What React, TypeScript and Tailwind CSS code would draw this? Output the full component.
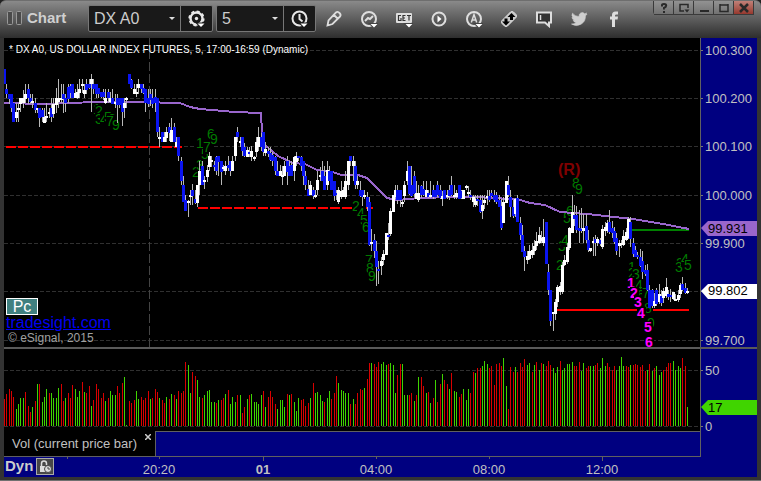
import type { ReactNode } from "react";

// x position of bar n, in chart pixels
const barX = (n: number) => Math.round(n * 2.355);

// direction + high, body top, body bottom, low
const CANDLES = `b69,69,84,84 b84,89,94,98 b94,94,99,104 b94,94,108,112 b103,103,122,122 w103,112,118,122 w103,108,110,122 w98,98,104,112 w90,98,103,108 w84,94,99,103
b84,89,98,104 b94,98,102,104 w94,101,102,108 b98,103,110,113 w108,108,109,113 b108,108,118,127 b108,110,117,122 w108,117,123,123 w103,116,118,122 w108,112,113,118
b98,108,117,122 w98,104,114,118 w88,98,105,113 w79,98,102,108 w84,98,100,103 b84,94,99,113 b94,98,103,112 b84,87,99,103 b84,86,93,98 b84,84,98,98
w89,93,98,98 w84,92,98,99 w79,89,93,98 w79,84,86,93 w84,90,94,98 b79,84,90,94 b79,84,88,89 w74,79,84,112 b79,84,89,94 b84,84,94,98
b88,88,94,98 b92,92,97,98 b89,92,97,100 w89,98,103,104 b89,92,98,103 w92,98,102,103 b89,98,104,104 w94,102,104,108 b94,98,105,123 b98,98,105,108
b98,98,112,126 w98,103,108,118 w97,98,99,108 b74,74,84,84 b79,80,88,89 w84,89,94,94 w84,92,94,97 w79,84,88,94 b84,84,89,93 b84,88,93,94
b89,89,103,112 b89,98,104,107 b89,94,100,106 b89,98,104,108 b89,97,103,112 b98,98,132,137 w127,137,139,147 b132,132,142,142 w132,137,142,142 w127,132,138,142
b123,127,133,141 w118,130,142,142 b123,127,142,142 w137,142,147,147 b137,137,156,161 b157,161,181,185 b176,185,202,202 b195,200,211,211 w200,201,203,217 w190,195,197,205
b184,190,196,205 b190,199,203,204 w185,185,203,207 w161,171,185,195 b161,166,185,185 w176,180,182,189 w165,170,177,182 w152,156,167,171 w156,160,162,167 b161,165,167,171
b156,157,171,175 b156,156,162,176 b161,161,172,185 w165,167,169,171 w161,166,171,175 b156,165,168,171 b161,161,171,176 w156,161,171,171 w137,137,156,161 b127,132,137,142
w137,141,142,147 b137,137,151,156 b143,147,156,157 w147,150,157,157 b147,152,153,157 w146,151,157,161 w156,157,158,161 w137,142,152,157 w127,137,147,151 b133,137,147,151
b132,132,152,156 w142,149,153,156 b147,151,154,157 b147,153,160,161 b152,155,161,166 b156,157,171,175 b161,171,176,176 w165,171,176,176 w166,175,177,185 w161,166,176,176
b156,161,172,185 b161,166,176,176 b161,165,176,176 w156,157,171,181 w152,156,162,166 b156,156,158,161 b156,157,166,171 b161,161,176,185 b171,176,185,190 b180,189,196,196
w181,185,195,195 b187,190,196,199 w190,195,197,198 w171,180,190,195 w167,175,177,181 b161,171,181,181 b166,176,190,190 w161,170,185,190 b166,171,181,181 b171,171,190,190
b181,181,196,201 b190,193,195,200 w187,190,202,204 w181,191,197,199 w187,190,197,197 w171,181,197,199 w161,161,185,190 b156,156,161,166 w156,161,166,181 b161,166,185,189
w176,181,185,189 b181,190,196,197 b190,190,197,206 w190,195,197,199 b192,197,207,211 b197,202,245,246 w229,242,244,251 b234,240,251,258 b241,251,267,286 b261,269,271,284
w257,261,266,275 w250,254,260,265 w233,233,255,255 b223,235,237,240 w208,211,234,236 w195,195,212,212 w185,190,197,199 b185,190,200,204 b190,190,200,207 w200,202,204,207
w181,185,196,202 w161,171,181,185 b166,166,194,195 b166,185,196,197 b171,176,194,197 w181,193,199,199 w185,193,200,202 b185,186,195,198 b181,189,195,196 w181,190,197,197
b190,193,197,198 w181,195,197,198 b185,190,197,199 b190,190,197,197 b181,185,195,197 b185,190,198,199 w191,196,199,206 b190,190,199,199 w190,195,196,199 b185,190,196,200
b176,185,195,196 w185,195,197,199 w190,193,197,199 b185,185,199,199 b190,191,198,199 w190,190,199,199 w185,186,188,190 w186,192,194,197 b190,195,197,200 w195,197,202,207
w195,199,205,207 b195,199,201,206 b195,200,212,213 w195,205,211,219 w195,200,203,209 w190,196,198,205 b190,196,200,202 b190,193,196,197 b190,195,200,202 b192,195,202,204
b195,200,207,207 b199,206,228,230 w197,202,223,223 w181,181,203,203 b176,185,195,197 b190,197,207,217 b200,207,216,218 w198,199,214,217 b195,198,222,222 b217,223,235,240
b225,235,252,252 b246,251,257,271 w251,256,260,264 w245,251,259,260 w243,250,255,258 w240,246,251,255 w232,241,246,250 w227,235,243,244 w231,238,241,243 w219,237,243,246
b222,222,264,264 b264,272,290,295 b290,290,321,326 w312,312,314,331 w299,302,314,320 w285,287,302,307 w282,286,292,295 w262,265,292,294 w255,260,265,266 w243,247,262,264
w227,228,248,250 w195,212,233,233 b205,215,219,226 b206,215,230,233 b210,228,231,243 b208,229,231,233 w214,228,231,243 b214,226,240,243 b230,240,250,252 w248,248,251,252
w237,241,243,256 b235,239,243,256 w237,239,243,246 b238,240,244,246 w225,229,247,249 w222,227,231,236 w220,223,231,233 b210,222,232,234 b221,228,233,238 b227,231,242,244
b233,238,251,255 w240,243,246,257 w240,243,245,248 w230,236,245,246 w228,232,240,241 w217,219,238,239 b217,222,239,247 b238,243,254,257 b246,250,257,257 b252,255,257,259
b249,257,266,267 b251,261,272,279 b265,270,274,276 b264,270,290,291 b285,290,308,308 b289,290,306,308 w293,301,306,308 b288,290,304,306 w284,294,302,304 b290,296,303,306
w288,291,298,303 w278,287,296,298 b290,294,297,300 b289,295,297,302 w292,292,299,300 w294,299,301,301 w290,295,300,302 w283,285,294,298 b277,284,290,291 b283,288,293,294
w288,291,293,294`
  .split(/\s+/)
  .map((c) => ({ up: c[0] === "w", v: c.slice(1).split(",").map((n) => Number(n) - 38) }));

// r = down bar, g = up bar, then the height
const VOLUME = `r27 r32 r37 r35 r29 g17 g22 g28 g28 r34 r20 r14 g19 r25 g42 r42 g24 g29 g37 r33 g33 g28 g28 g38 r42 r25 g28 r33 r28 r41
g37 g29 g35 r44 g34 r33 r40 g20 r26 r42 r37 r28 r33 g25 r28 g35 g31 g31 r40 r33 r43 g49 g1 r25 r23 r26 g35 g27 r29 r26
r28 r35 g27 r28 r37 r34 g28 r26 r23 g29 r27 g32 r31 g27 r35 r33 r35 r64 g61 g33 r54 r50 g46 g29 r28 g31 g35 g36 g24 g24
r23 g26 r26 r28 g32 r36 g22 g29 g24 r31 g31 r13 r19 g27 r31 g32 g24 g24 g22 g31 r35 g19 r29 r35 r29 r22 g17 g26 g26 g19
r32 g31 r32 g24 g15 g28 r26 r27 r20 r23 g28 r43 g33 g34 g31 g25 r24 g28 g35 r27 r33 r50 g43 g36 g35 g33 g33 r22 g27 r22
r33 r37 r36 g38 r47 r63 g63 r62 r59 r64 g62 g64 g61 r62 g63 g61 g33 r51 r62 g62 g31 g31 r31 r33 g25 r31 g49 r49 r40 g33
r34 g23 r28 g46 r24 r42 g52 r46 r42 g37 r53 g35 g34 r29 r32 g37 g26 g37 r33 r54 g53 r58 r58 g60 g65 g62 r58 r60 r41 r62
r63 r60 g68 g40 r17 r59 r54 g59 r54 r63 r59 r67 g61 g63 r54 g61 r64 g56 r63 g62 r60 r65 r61 g58 g53 g59 r65 g56 g58 g62
g62 g64 r60 r60 r64 g55 g63 r58 r60 g60 g60 r61 r63 g58 g68 g60 r63 r59 r56 r60 g56 g60 g69 g60 r60 r59 g61 r61 r62 r61
r59 r61 r55 g56 r62 g55 r58 g60 g51 g54 r56 r59 r63 r63 g65 g56 g60 g58 r68 r60 g19`
  .split(/\s+/)
  .map((c) => ({ up: c[0] === "g", h: Number(c.slice(1)) }));

const AVERAGE =
  "0,65 42,66 91,64 146,64 166,65 176,65 186,69 196,71 231,74 257,75 258,94 261,107 274,118 289,125 301,126 313,132 328,134 338,137 354,137 363,140 373,150 383,160 393,162 416,160 449,159 473,159 506,161 513,161 526,165 541,167 556,174 583,176 629,181 659,186 685,191";

const PRICES = [
  { y: 12, label: "100.300" },
  { y: 60, label: "100.200" },
  { y: 108, label: "100.100" },
  { y: 157, label: "100.000" },
  { y: 205, label: "99.900" },
  { y: 253, label: "" },
  { y: 302, label: "99.700" },
];

// sequential counts; each digit blanks out what lies under it
const COUNTS: [string, number, number][] = [
  ["1", 89, 76], ["2", 91, 78], ["3", 91, 86], ["4", 96, 86], ["5", 100, 84], ["6", 104, 86], ["7", 102, 88], ["9", 108, 92],
  ["2", 188, 139], ["3", 192, 132], ["1", 192, 110], ["5", 197, 121], ["7", 199, 114], ["6", 203, 101], ["9", 206, 106],
  ["2", 348, 173], ["4", 353, 180], ["5", 356, 187], ["6", 358, 194], ["7", 361, 227], ["8", 362, 235], ["9", 364, 243],
  ["2", 552, 232], ["3", 554, 213], ["4", 557, 207], ["5", 559, 185], ["6", 562, 178], ["8", 568, 150], ["9", 571, 156],
  ["1", 624, 234], ["2", 624, 240], ["3", 628, 241], ["4", 631, 252], ["6", 633, 262], ["7", 638, 260], ["8", 640, 275], ["9", 643, 290],
  ["1", 671, 236], ["2", 672, 230], ["3", 671, 234], ["4", 677, 226], ["5", 680, 232],
];

const COUNTDOWN: [string, number, number][] = [
  ["1", 623, 250], ["2", 626, 260], ["3", 630, 269], ["4", 633, 280], ["5", 640, 294], ["6", 641, 309],
];

function Icon({ label, children }: { label: string; children: ReactNode }) {
  return (
    <button type="button" aria-label={label} className="flex size-[35px] shrink-0 items-center justify-center">
      <svg width="18" height="18" viewBox="0 0 18 18" fill="none" stroke="#dedede" strokeWidth="2">
        {children}
      </svg>
    </button>
  );
}

const Caret = () => <path d="M10.500 14h7l-3.500 3.500z" fill="#fff" stroke="#444" strokeWidth="2" paintOrder="stroke" />;

function Picker({ label, value, width, children }: { label: string; value: string; width: string; children: ReactNode }) {
  return (
    <div className="flex h-[27px] shrink-0 overflow-hidden rounded-[2px] border border-[#777] bg-[#191919]">
      <label className={`relative flex items-center border-r border-[#777] ${width}`}>
        <span className="sr-only">{label}</span>
        <select defaultValue={value} className="w-full appearance-none bg-transparent pl-[5px] text-base leading-5 text-[#ccc] outline-none">
          <option>{value}</option>
        </select>
        <svg className="pointer-events-none absolute right-[5px]" width="6" height="4" viewBox="0 0 6 4">
          <path d="M0 0h6L3 3z" fill="#ddd" />
        </svg>
      </label>
      <button type="button" aria-label={`${label} settings`} className="flex w-[31px] items-center justify-center">
        <svg width="18" height="18" viewBox="0 0 18 18" fill="none" stroke="#e8e8e8" strokeWidth="2">
          {children}
          <path d="M9.500 13.500h7L13 17z" fill="#fff" stroke="#191919" strokeWidth="2" paintOrder="stroke" />
        </svg>
      </button>
    </div>
  );
}

function WindowButton({ label, close, children }: { label: string; close?: boolean; children: ReactNode }) {
  return (
    <button
      type="button"
      aria-label={label}
      className={`flex h-[14px] w-5 items-center justify-center border-r border-b border-[#3a3a3a] bg-gradient-to-b ${
        close ? "from-[#c08078] to-[#96382e]" : "from-[#929292] to-[#727272]"
      }`}
    >
      <svg width="12" height="10" viewBox="0 0 12 10" fill="none" stroke="#292929" strokeWidth="2">
        {children}
      </svg>
    </button>
  );
}

function Toolbar() {
  return (
    <header className="relative flex h-[38px] items-start rounded-t-md border-t border-[#6e6e6e] bg-gradient-to-b from-[#8a8a8a] via-[#5c5c5c] to-[#2e2e2e] pl-[7px]">
      <div className="flex h-[34px] w-[81px] shrink-0 items-center gap-[5px]">
        <svg width="15" height="14" viewBox="0 0 15 14" fill="#4b4b4b" stroke="#999">
          <rect x=".5" y=".5" width="5" height="13" rx="1" />
          <rect x="9.500" y=".5" width="5" height="13" rx="1" />
        </svg>
        <h1 className="text-[15px] font-bold text-[#d0d0d0]">Chart</h1>
      </div>
      <div className="flex gap-[3px] pt-1">
        <Picker label="Symbol" value="DX A0" width="w-[92px]">
          <circle cx="8.500" cy="8.500" r="6" strokeWidth="2.400" />
          <circle cx="8.500" cy="8.500" r="7.200" strokeWidth="1.800" strokeDasharray="3 2.650" />
          <circle cx="8.500" cy="8.500" r="1.700" fill="#e8e8e8" stroke="none" />
        </Picker>
        <Picker label="Interval" value="5" width="w-[67px]">
          <circle cx="8.500" cy="8.500" r="7" />
          <path d="M8.500 4v5l3 2.500" />
        </Picker>
      </div>
      <nav className="flex">
        <Icon label="Draw">
          <path d="M2.500 15.500l1-5 7.500-8q1.500-1.500 3.500.5t.5 3.500l-7.500 7.500z M9 5l3.500 3.500" strokeWidth="1.800" />
        </Icon>
        <Icon label="Studies">
          <circle cx="9" cy="9" r="7" />
          <path d="M5 11l3-3 2 1 3-3" />
          <Caret />
        </Icon>
        <Icon label="GET studies">
          <rect x="1" y="3" width="16" height="10" rx="1" fill="#dedede" stroke="none" />
          <path d="M6 5.500H3.500v5H6V8M10.500 5.500h-2.500v5h2.500M8 8h2M12 5.500h4M14 5.500v5" stroke="#333" strokeWidth="1.200" />
          <Caret />
        </Icon>
        <Icon label="Playback">
          <circle cx="9" cy="9" r="6.500" />
          <path d="M7.500 5.500v7l4-3.500z" fill="#fff" stroke="none" />
        </Icon>
        <Icon label="Alerts">
          <circle cx="9" cy="9" r="7" />
          <path d="M6.300 12.500l2.700-8 2.700 8M7 10h4" strokeWidth="1.500" />
          <Caret />
        </Icon>
        <Icon label="Trade">
          <path d="M2 10.500L10.500 2q1.500-1 3 0l2.500 2.500q1 1.500 0 3L7.500 16q-1.500 1-3 0L2 13.500q-1-1.500 0-3z" fill="#c9c9c9" stroke="#dedede" strokeWidth="1" />
          <path d="M11.500 3l4 4h-2.500v3h-3V7H7.500zM6 15.500l-4-4h2.500v-3h3v3H10z" fill="#000" stroke="none" />
        </Icon>
        <Icon label="Note">
          <path d="M2 2.500h14v10h-2V16l-4-3.500H2z" fill="#333" />
          <path d="M5.500 5v5" strokeWidth="1.500" />
        </Icon>
        <Icon label="Twitter">
          <path
            d="M17 4.200a6 6 0 0 1-1.800.5 3.200 3.200 0 0 0 1.400-1.800 6 6 0 0 1-2 .8 3.200 3.200 0 0 0-5.500 2.900A9 9 0 0 1 2.500 3.200a3.200 3.200 0 0 0 1 4.300 3 3 0 0 1-1.500-.4 3.200 3.200 0 0 0 2.600 3.100 3 3 0 0 1-1.400.1 3.200 3.200 0 0 0 3 2.200A6.500 6.500 0 0 1 1.500 14 9 9 0 0 0 15.400 5.800 6 6 0 0 0 17 4.200z"
            fill="#cfcfcf"
            stroke="#cfcfcf"
            strokeWidth=".6"
          />
        </Icon>
        <Icon label="Facebook">
          <path d="M7 17V9.500H5v-3h2V5q0-3.500 3.500-3.500H13v3h-1.500q-1.500 0-1.500 1v1h3l-.4 3H10V17z" fill="#dedede" stroke="none" />
        </Icon>
      </nav>
      <div className="absolute top-0 right-[7px] flex rounded-b-sm border-l border-[#3a3a3a]">
        <WindowButton label="Help">
          <path d="M4 3.500V2q0-1 2-1t2.200 1.500Q8.200 4 6 5v1.500M6 8v2" />
        </WindowButton>
        <WindowButton label="Menu">
          <path d="M10 5V1.500H2V8h4" strokeWidth="1.500" />
          <path d="M6.500 6.500h5L9 9.500z" fill="#292929" stroke="none" />
        </WindowButton>
        <WindowButton label="Minimize">
          <path d="M2 8h9" />
        </WindowButton>
        <WindowButton label="Maximize">
          <path d="M2 2h8M2 1v7.500h8V1" strokeWidth="1.500" />
        </WindowButton>
        <WindowButton label="Close" close>
          <path d="M2 1l8 8M10 1L2 9" strokeWidth="2.500" />
        </WindowButton>
      </div>
    </header>
  );
}

function PricePlot() {
  return (
    <svg className="block h-full w-full" viewBox="0 0 696 309" shapeRendering="crispEdges" role="img" aria-label="Price chart">
      {PRICES.map((p) => (
        <path key={p.y} d={`M0 ${p.y + 0.5}H696`} stroke="#303030" strokeDasharray="4 2" />
      ))}
      <path d="M145.500 0V309" stroke="#444" strokeDasharray="9 3" />
      <path d="M2 109H178" stroke="#f00" strokeWidth="2" strokeDasharray="10 2" />
      <path d="M194 170H369" stroke="#f00" strokeWidth="2" strokeDasharray="10 2" />
      <path d="M552 272H685" stroke="#f00" strokeWidth="2" />
      <path d="M626 192H685" stroke="#008000" strokeWidth="2" />
      <g fontSize="14" fill="#007a00">
        {COUNTS.map(([digit, x, y], i) => (
          <g key={i}>
            <rect x={x} y={y - 11} width="9" height="13" fill="#000" />
            <text x={x} y={y}>{digit}</text>
          </g>
        ))}
      </g>
      <g fontSize="14" fontWeight="bold" fill="#f0f">
        {COUNTDOWN.map(([digit, x, y], i) => (
          <g key={i}>
            <rect x={x} y={y - 11} width="9" height="13" fill="#000" />
            <text x={x} y={y}>{digit}</text>
          </g>
        ))}
      </g>
      <text x="554" y="137" fontSize="16" fontWeight="bold" fill="#800000">(R)</text>
      <polyline points={AVERAGE} fill="none" stroke="#9966cc" strokeWidth="2" />
      {CANDLES.map(({ up, v }, i) => (
        <g key={i}>
          <rect x={barX(i)} y={v[0]} width="1" height={v[3] - v[0]} fill="#b8b8b8" />
          <rect x={barX(i) - 1} y={v[1]} width="3" height={Math.max(v[2] - v[1], 2)} fill={up ? "#fff" : "#0a14f0"} />
        </g>
      ))}
    </svg>
  );
}

function PriceAxis() {
  return (
    <svg className="block h-full w-full" viewBox="0 0 56 309" fontSize="13" fill="#c0c0c0">
      {PRICES.map((p) => (
        <g key={p.y}>
          <path d={`M0 ${p.y + 0.5}h2`} stroke="#777" />
          <text x={4} y={p.y + 5}>{p.label}</text>
        </g>
      ))}
      <path d="M0 190l7-7h49v15H7z" fill="#9966cc" />
      <text x="7" y="195" fill="#000">99.931</text>
      <path d="M0 253l7-7h49v15H7z" fill="#fff" />
      <text x="7" y="257" fill="#000">99.802</text>
    </svg>
  );
}

function VolumePlot() {
  return (
    <svg className="block h-full w-full" viewBox="0 0 696 82" shapeRendering="crispEdges" role="img" aria-label="Volume chart">
      <path d="M0 21.500H696M0 77.500H696" stroke="#303030" strokeDasharray="4 2" />
      {VOLUME.map((bar, i) => (
        <rect key={i} x={barX(i)} y={77 - bar.h} width="1" height={bar.h} fill={bar.up ? "#3fd400" : "#d80000"} />
      ))}
    </svg>
  );
}

const TIMES = [
  { label: "20:20", x: 155, bold: false },
  { label: "01", x: 259, bold: true },
  { label: "04:00", x: 372, bold: false },
  { label: "08:00", x: 485, bold: false },
  { label: "12:00", x: 598, bold: false },
];

export default function App() {
  return (
    <div className="bg-[#222] font-['Liberation_Sans',Arial,sans-serif]">
      <div className="flex min-h-screen flex-col rounded-t-md border-b border-[#707070] bg-[#333]">
        <Toolbar />
        <main className="mr-px flex flex-1 flex-col border-r-[3px] border-b-[3px] border-l-4 border-[#333] bg-[#000080]">
          <section className="relative flex">
            <div className="min-w-0 flex-1 bg-black">
              <PricePlot />
            </div>
            <div className="w-[57px] shrink-0 border-l border-[#606060]">
              <PriceAxis />
            </div>
            <h2 className="absolute top-[6px] left-[5px] text-[10px] leading-3 text-white">
              * DX A0, US DOLLAR INDEX FUTURES, 5, 17:00-16:59 (Dynamic)
            </h2>
            <div className="absolute bottom-[2px] left-[2px] flex flex-col items-start">
              <span className="flex h-[17px] w-8 items-center justify-center border border-white bg-[#408080] text-base leading-4 text-white">Pc</span>
              <a href="#" className="text-base leading-4 text-[#0000f0] underline">tradesight.com</a>
              <small className="pl-[2px] text-xs leading-[14px] text-[#a0a0a0]">© eSignal, 2015</small>
            </div>
          </section>
          <div className="h-[2px] bg-[#5a5a5a]" />
          <section className="flex">
            <div className="min-w-0 flex-1 bg-black">
              <VolumePlot />
            </div>
            <div className="w-[57px] shrink-0 border-l border-[#606060]">
              <svg className="block h-full w-full" viewBox="0 0 56 82" fontSize="13" fill="#c0c0c0">
                <path d="M0 21.500h2M0 77.500h2" stroke="#777" />
                <text x="4" y="26">50</text>
                <text x="4" y="82">0</text>
                <path d="M0 58l7-7h49v15H7z" fill="#40d400" />
                <text x="7" y="63" fill="#000">17</text>
              </svg>
            </div>
          </section>
          <section className="flex h-[25px] pr-14">
            <div className="flex w-[151px] items-start bg-black pl-2 text-[13px] text-[#c0c0c0]">
              <span className="pt-[3px] leading-5 whitespace-nowrap">Vol (current price bar)</span>
              <button type="button" aria-label="Close study" className="ml-auto pt-[3px] pr-1">
                <svg width="6" height="6" viewBox="0 0 6 6" stroke="#ccc" strokeWidth="1.500">
                  <path d="M0 0l6 6M6 0L0 6" />
                </svg>
              </button>
            </div>
            <div className="flex-1 border border-b-0 border-[#606060]" />
          </section>
          <footer className="relative flex flex-1 pr-14">
            <svg className="block h-5 w-full" viewBox="0 0 697 20" fontSize="13" fill="#c0c0c0">
              <path d="M0 .5H697M63.500 0v3M155.500 0v3M259.500 0v5M372.500 0v3M485.500 0v3M598.500 0v5" stroke="#606060" />
              {TIMES.map((t) => (
                <text key={t.label} x={t.x} y="18" textAnchor="middle" fontWeight={t.bold ? "bold" : "normal"}>
                  {t.label}
                </text>
              ))}
            </svg>
            <div className="absolute top-px left-px flex items-center gap-[3px]">
              <span className="text-[15px] leading-[18px] font-bold text-[#ccc]">Dyn</span>
              <button type="button" aria-label="Lock time scale" className="border border-[#aaa] bg-[#484848]">
                <svg width="16" height="15" viewBox="0 0 16 15" fill="#ddd">
                  <path d="M4.500 7V4.500a2.500 2.500 0 0 1 5 0V6" fill="none" stroke="#ddd" strokeWidth="1.500" />
                  <rect x="3" y="7" width="7" height="6" />
                  <circle cx="11" cy="10" r="3.500" stroke="#484848" />
                  <path d="M11 8v2h2" fill="none" stroke="#484848" />
                </svg>
              </button>
            </div>
          </footer>
        </main>
      </div>
    </div>
  );
}
